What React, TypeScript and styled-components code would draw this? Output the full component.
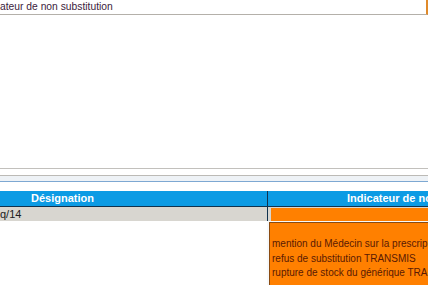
import styled, { createGlobalStyle } from 'styled-components';

const GlobalStyle = createGlobalStyle`
  html, body {
    margin: 0;
    padding: 0;
    background: #ffffff;
    overflow: hidden;
  }
  body {
    font-family: "Liberation Sans", Arial, sans-serif;
    font-size: 11px;
  }
`

const reasons = [
  'mention du Médecin sur la prescription',
  'refus de substitution TRANSMIS',
  'rupture de stock du générique TRANSMIS',
]

const App = () => {
  return (
    <Page>
      <GlobalStyle />
      <TitleBar>
        <TitleText>ateur de non substitution</TitleText>
      </TitleBar>
      <Spacer />
      <Toolbar>
        <ToolbarStrip />
      </Toolbar>
      <Grid>
        <HeaderCell>Désignation</HeaderCell>
        <HeaderCell $left>Indicateur de non substitution</HeaderCell>
        <RowCell>q/14</RowCell>
        <RowCell $left>
          <Swatch />
        </RowCell>
        <EmptyCell />
        <ReasonCell>
          {reasons.map((r) => (
            <Reason key={r}>{r}</Reason>
          ))}
        </ReasonCell>
      </Grid>
    </Page>
  )
}

export default App;

const Page = styled.div`
  width: 428px;
  height: 285px;
  display: flex;
  flex-direction: column;
  overflow: hidden;
`
const TitleBar = styled.div`
  height: 14px;
  width: 426px;
  border-bottom: 1px solid #b4b0aa;
  border-right: 2px solid #e08a2a;
  display: flex;
  align-items: center;
`
const TitleText = styled.span`
  color: #3c1c3c;
  font-size: 10.3px;
  white-space: nowrap;
  line-height: 14px;
`
const Spacer = styled.div`
  height: 153px;
`
const Toolbar = styled.div`
  height: 6px;
  border-top: 1px solid #c2c0bc;
  border-bottom: 1px solid #bcbab6;
  background: #ffffff;
`
const ToolbarStrip = styled.div`
  height: 5px;
  margin-top: 7px;
  background: #eef2f6;
  border-bottom: 1px solid #7da8d2;
`
const Grid = styled.div`
  margin-top: 15px;
  display: grid;
  grid-template-columns: 267px 1fr;
  grid-template-rows: 16px 14px 1fr;
  flex: 1;
  background: #f6f8fa;
`
const HeaderCell = styled.div<{ $left?: boolean }>`
  background: #0c9be4;
  color: #ffffff;
  font-weight: bold;
  padding-left: ${p => (p.$left ? '79px' : '31px')};
  border-bottom: 1px solid #10324e;
  border-left: ${p => (p.$left ? '1px solid #10324e' : 'none')};
  line-height: 15px;
  white-space: nowrap;
  overflow: hidden;
`
const RowCell = styled.div<{ $left?: boolean }>`
  background: #d8d6d0;
  color: #202020;
  line-height: 14px;
  border-left: ${p => (p.$left ? '1px solid #10324e' : 'none')};
  display: flex;
  white-space: nowrap;
  overflow: hidden;
`
const Swatch = styled.div`
  margin-left: 3px;
  margin-top: 1px;
  flex: 1;
  background: #ff8000;
`
const EmptyCell = styled.div`
  background: #ffffff;
`
const ReasonCell = styled.div`
  margin-left: 2px;
  margin-top: 1px;
  background: #ff8000;
  border-left: 1px solid #8a4a10;
  border-top: 1px solid #8a4a10;
  padding: 14px 0 0 2px;
  display: flex;
  flex-direction: column;
  white-space: nowrap;
  overflow: hidden;
`
const Reason = styled.div`
  color: #5a1a04;
  font-size: 10px;
  line-height: 14.5px;
`
